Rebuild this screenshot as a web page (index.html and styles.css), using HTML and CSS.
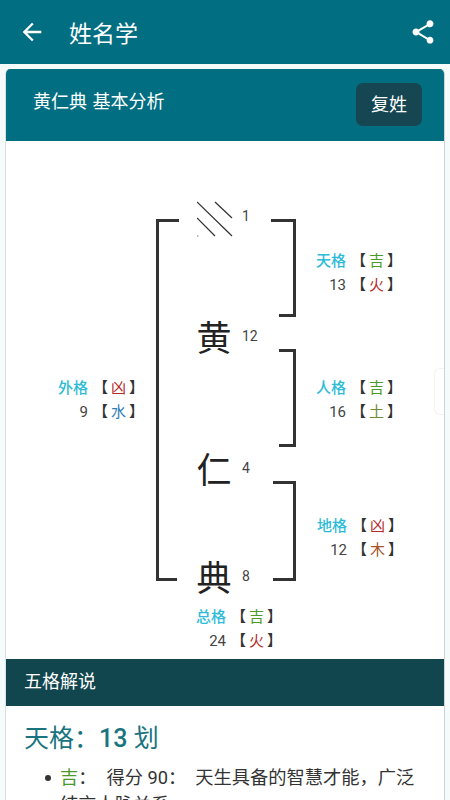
FILE: index.html
```html
<!DOCTYPE html>
<html>
<head>
    <meta charset="UTF-8">
    <title>姓名学</title>
    <link rel="stylesheet" href="styles.css">
</head>
<body>
    <div class="toolbar">
        <svg class="back-icon" viewBox="0 0 24 24"><path d="M20 11H7.83l5.59-5.59L12 4l-8 8 8 8 1.41-1.41L7.83 13H20v-2z"/></svg>
        <div class="toolbar-title">姓名学</div>
        <svg class="share-icon" viewBox="0 0 24 24"><path d="M18 16.08c-.76 0-1.44.3-1.96.77L8.91 12.7c.05-.23.09-.46.09-.7s-.04-.47-.09-.7l7.05-4.11c.54.5 1.25.81 2.04.81 1.66 0 3-1.34 3-3s-1.34-3-3-3-3 1.34-3 3c0 .24.04.47.09.7L8.04 9.81C7.5 9.31 6.79 9 6 9c-1.66 0-3 1.34-3 3s1.34 3 3 3c.79 0 1.5-.31 2.04-.81l7.12 4.16c-.05.21-.08.43-.08.65 0 1.61 1.31 2.92 2.92 2.92s2.92-1.31 2.92-2.92-1.31-2.92-2.92-2.92z"/></svg>
    </div>

    <div class="card">
        <div class="card-header">
            <div class="card-title">黄仁典 基本分析</div>
            <div class="fu-btn">复姓</div>
        </div>

        <div class="diagram">
            <div class="bracket bracket-left"></div>
            <div class="bracket bracket-r1"></div>
            <div class="bracket bracket-r2"></div>
            <div class="bracket bracket-r3"></div>

            <svg class="stroke-mark" viewBox="0 0 37 36">
                <path d="M18 1L35 17M0 1L35 35M0 17L18 35"/>
                <circle cx="0.8" cy="35" r="0.8"/>
            </svg>
            <div class="count count-1">1</div>

            <div class="hanzi hanzi-1">黄</div>
            <div class="count count-2">12</div>
            <div class="hanzi hanzi-2">仁</div>
            <div class="count count-3">4</div>
            <div class="hanzi hanzi-3">典</div>
            <div class="count count-4">8</div>

            <div class="ge ge-tian">
                <div class="ge-row"><span class="ge-name">天格</span><span class="ge-tag">【<i class="green">吉</i>】</span></div>
                <div class="ge-row"><span class="ge-num">13</span><span class="ge-tag">【<i class="red">火</i>】</span></div>
            </div>
            <div class="ge ge-ren">
                <div class="ge-row"><span class="ge-name">人格</span><span class="ge-tag">【<i class="green">吉</i>】</span></div>
                <div class="ge-row"><span class="ge-num">16</span><span class="ge-tag">【<i class="olive">土</i>】</span></div>
            </div>
            <div class="ge ge-di">
                <div class="ge-row"><span class="ge-name">地格</span><span class="ge-tag">【<i class="red">凶</i>】</span></div>
                <div class="ge-row"><span class="ge-num">12</span><span class="ge-tag">【<i class="brown">木</i>】</span></div>
            </div>
            <div class="ge ge-wai">
                <div class="ge-row"><span class="ge-name">外格</span><span class="ge-tag">【<i class="red">凶</i>】</span></div>
                <div class="ge-row"><span class="ge-num">9</span><span class="ge-tag">【<i class="blue">水</i>】</span></div>
            </div>
            <div class="ge ge-zong">
                <div class="ge-row"><span class="ge-name">总格</span><span class="ge-tag">【<i class="green">吉</i>】</span></div>
                <div class="ge-row"><span class="ge-num">24</span><span class="ge-tag">【<i class="red">火</i>】</span></div>
            </div>
            <div class="side-handle"></div>
        </div>

        <div class="section-header">五格解说</div>
        <div class="section-body">
            <h2 class="section-title">天格：<b>13</b> 划</h2>
            <ul class="detail-list">
                <li><span class="green">吉</span>：<span class="score">得分 90：</span><span class="desc">天生具备的智慧才能，广泛结交人脉关系</span></li>
            </ul>
        </div>
    </div>
</body>
</html>
```

FILE: styles.css
```css
* {
    margin: 0;
    padding: 0;
    box-sizing: border-box;
}

html, body {
    height: 800px;
    overflow: hidden;
}

body {
    font-family: Roboto, "Noto Sans CJK SC", sans-serif;
    background: #f5fafb;
    color: #333;
}

.toolbar {
    display: flex;
    align-items: center;
    height: 64px;
    background: #026e82;
    color: white;
    padding: 0 13px 0 18px;
}

.back-icon {
    width: 28px;
    height: 28px;
    fill: white;
}

.toolbar-title {
    font-size: 23px;
    margin-left: 23px;
    flex: 1;
}

.share-icon {
    width: 28px;
    height: 28px;
    fill: white;
}

.card {
    margin: 5px 5px 0;
    background: white;
    border-radius: 5px 5px 0 0;
    border-left: 1px solid #dcdfe1;
    border-right: 1px solid #d0d3d6;
    overflow: hidden;
}

.card-header {
    display: flex;
    justify-content: space-between;
    margin: 0 -1px;
    height: 72px;
    background: #026e82;
    color: white;
    padding: 14px 23px 0 28px;
}

.card-title {
    font-size: 18px;
    line-height: 38px;
    word-spacing: 1px;
}

.fu-btn {
    width: 66px;
    height: 43px;
    line-height: 43px;
    text-align: center;
    font-size: 18px;
    background: #164651;
    border-radius: 7px;
}

/* 笔画图 */
.diagram {
    position: relative;
    height: 518px;
}

.bracket {
    position: absolute;
    border: 3px solid #333;
}

.bracket-left {
    left: 150px;
    top: 78px;
    width: 23px;
    height: 362px;
    border-right: none;
}

.bracket-left::before {
    content: "";
    position: absolute;
    right: 0;
    bottom: -3px;
    width: 2px;
    height: 3px;
    background: white;
}

.bracket-r1, .bracket-r2, .bracket-r3 {
    border-left: none;
}

.bracket-r1 {
    left: 265px;
    top: 78px;
    width: 25px;
    height: 98px;
    border-bottom: none;
}

.bracket-r1::after {
    content: "";
    position: absolute;
    right: -3px;
    bottom: 0;
    width: 17px;
    height: 3px;
    background: #333;
}

.bracket-r2 {
    left: 273px;
    top: 208px;
    width: 17px;
    height: 98px;
}

.bracket-r3 {
    left: 267px;
    top: 340px;
    width: 23px;
    height: 100px;
}

.stroke-mark {
    position: absolute;
    left: 191px;
    top: 60px;
    width: 37px;
    height: 36px;
    stroke: #333;
    stroke-width: 1.2;
    fill: #888;
}

.stroke-mark circle {
    stroke: none;
}

.hanzi {
    position: absolute;
    left: 188px;
    width: 40px;
    text-align: center;
    font-size: 35px;
    line-height: 40px;
    color: #222;
}

.hanzi-1 { top: 179px; }
.hanzi-2 { top: 311px; }
.hanzi-3 { top: 419px; }

.count {
    position: absolute;
    left: 236px;
    font-size: 14px;
    line-height: 18px;
    color: #444;
}

.count-1 { top: 66px; }
.count-2 { top: 186px; }
.count-3 { top: 318px; }
.count-4 { top: 426px; }

.ge {
    position: absolute;
    font-size: 15px;
    white-space: nowrap;
}

.ge-row {
    display: flex;
    height: 23.5px;
    line-height: 23.5px;
}

.ge-name, .ge-num {
    width: 31px;
    text-align: right;
}

.ge-name {
    color: #2dbbd8;
    font-weight: 500;
}

.ge-num {
    color: #444;
}

.ge-tag {
    margin-left: 5px;
    color: #333;
    font-weight: 500;
}

.ge-tag i {
    font-style: normal;
    font-weight: 400;
    margin: 0 3px;
}

.ge-tian { left: 309px; top: 109px; }
.ge-ren { left: 309px; top: 236px; }
.ge-di { left: 310px; top: 374px; }
.ge-wai { left: 51px; top: 236px; }
.ge-zong { left: 189px; top: 465px; }

.green { color: #4c9a2a; }
.red { color: #b52a2a; }
.olive { color: #6f8b3a; }
.brown { color: #a5562a; }
.blue { color: #2f7db5; }

.side-handle {
    position: absolute;
    right: 0;
    top: 227px;
    width: 10px;
    height: 47px;
    border: 1px solid #f3f3f3;
    border-right: none;
    border-radius: 6px 0 0 6px;
}

.section-header {
    margin: 0 -1px;
    height: 47px;
    line-height: 46px;
    padding-left: 19px;
    background: #12464f;
    color: white;
    font-size: 18px;
}

.section-body {
    padding: 13px 18px 0;
}

.section-title {
    font-size: 25px;
    line-height: 40px;
    font-weight: 400;
    color: #1a7480;
}

.section-title b {
    font-weight: 500;
}

.detail-list {
    list-style: none;
    margin-top: 5px;
    padding: 0 0 0 36px;
    font-size: 18.25px;
    line-height: 27px;
    color: #333;
}

.detail-list li {
    position: relative;
}

.detail-list li::before {
    content: "";
    position: absolute;
    left: -15px;
    top: 11px;
    width: 6px;
    height: 6px;
    border-radius: 50%;
    background: #333;
}

.score {
    margin-left: 10px;
}

.desc {
    margin-left: 9px;
}
```
